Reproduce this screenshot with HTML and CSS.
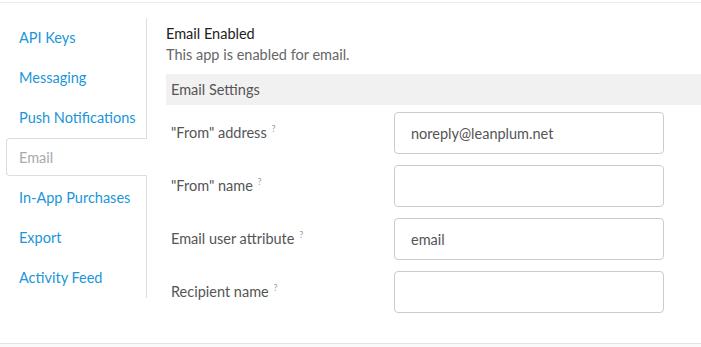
FILE: index.html
```html
<!DOCTYPE html>
<html lang="en">
<head>
    <meta charset="UTF-8">
    <meta name="viewport" content="width=device-width, initial-scale=1.0">
    <title>App Settings - Email</title>
    <link rel="stylesheet" href="styles.css">
</head>
<body>
    <div class="page">
        <div class="settings">
            <ul class="side-nav">
                <li class="nav-item"><a href="#">API Keys</a></li>
                <li class="nav-item"><a href="#">Messaging</a></li>
                <li class="nav-item"><a href="#">Push Notifications</a></li>
                <li class="nav-item active"><a href="#">Email</a></li>
                <li class="nav-item"><a href="#">In-App Purchases</a></li>
                <li class="nav-item"><a href="#">Export</a></li>
                <li class="nav-item"><a href="#">Activity Feed</a></li>
            </ul>

            <div class="panel">
                <div class="status">
                    <div class="status-title">Email Enabled</div>
                    <div class="status-text">This app is enabled for email.</div>
                </div>

                <div class="section-bar">Email Settings</div>

                <div class="form-rows">
                    <div class="form-row">
                        <label for="fromAddress">"From" address <sup class="hint">?</sup></label>
                        <input type="text" id="fromAddress" value="noreply@leanplum.net">
                    </div>
                    <div class="form-row">
                        <label for="fromName">"From" name <sup class="hint">?</sup></label>
                        <input type="text" id="fromName" value="">
                    </div>
                    <div class="form-row">
                        <label for="userAttr">Email user attribute <sup class="hint">?</sup></label>
                        <input type="text" id="userAttr" value="email">
                    </div>
                    <div class="form-row">
                        <label for="recipient">Recipient name <sup class="hint">?</sup></label>
                        <input type="text" id="recipient" value="">
                    </div>
                </div>
            </div>
        </div>
        <div class="footer"></div>
    </div>
</body>
</html>
```

FILE: styles.css
```css
body {
    font-family: 'Lato', 'Open Sans', sans-serif;
    font-size: 14.5px;
    background-color: #ffffff;
    margin: 0;
    padding: 0;
}

.page {
    margin-top: 2px;
    border-top: 1px solid #ebebeb;
}

.settings {
    display: flex;
    align-items: flex-start;
    height: 340px;
    padding-top: 15px;
    box-sizing: border-box;
}

.side-nav {
    list-style: none;
    margin: 0;
    padding: 0;
    width: 146px;
    border-right: 1px solid #dddddd;
    flex-shrink: 0;
}

.nav-item {
    height: 40px;
    display: flex;
    align-items: center;
    padding-left: 19px;
    padding-bottom: 2px;
    box-sizing: border-box;
}

.nav-item a {
    color: #1a96d9;
    text-decoration: none;
}

.nav-item.active {
    height: 38px;
    margin: 0 -1px 2px 6px;
    padding-left: 12px;
    padding-bottom: 0;
    border: 1px solid #dddddd;
    border-right: none;
    border-radius: 4px 0 0 4px;
    background-color: #ffffff;
    position: relative;
}

.nav-item.active a {
    color: #aaaaaa;
}

.panel {
    flex: 1;
    padding-left: 19px;
}

.status-title {
    color: #222222;
    line-height: 20px;
    margin-top: 6px;
}

.status-text {
    color: #666666;
    line-height: 20px;
    margin-top: 1px;
}

.section-bar {
    margin-top: 9px;
    height: 31px;
    line-height: 32px;
    padding-left: 5px;
    background-color: #f1f1f1;
    color: #555555;
}

.form-rows {
    display: flex;
    flex-direction: column;
    gap: 11px;
    padding-top: 7px;
}

.form-row {
    display: flex;
    align-items: center;
}

.form-row label {
    width: 223px;
    padding-left: 5px;
    padding-bottom: 2px;
    color: #555555;
}

.hint {
    font-size: 9px;
    color: #999999;
    margin-left: 1px;
}

input[type="text"] {
    width: 270px;
    height: 42px;
    padding: 0 16px;
    border: 1px solid #cccccc;
    border-radius: 4px;
    font-family: inherit;
    font-size: 14.5px;
    color: #555555;
    box-sizing: border-box;
}

.footer {
    border-top: 1px solid #e3e3e3;
    background-color: #fafafa;
    height: 10px;
}
```
